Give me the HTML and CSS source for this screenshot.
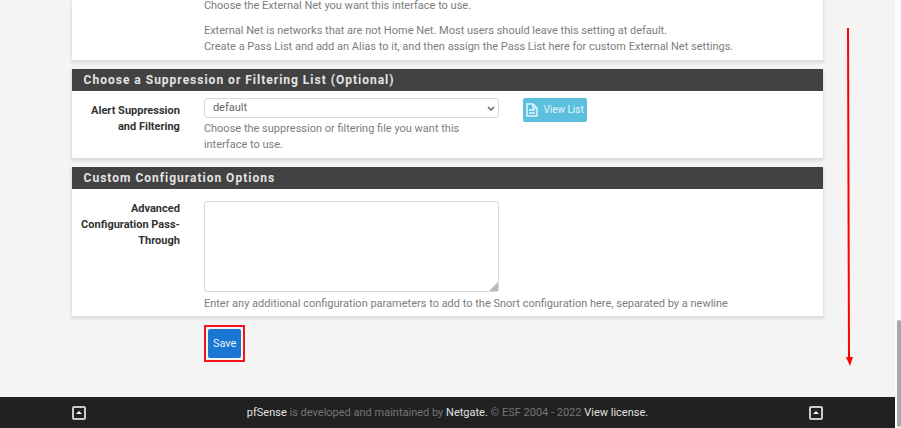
FILE: index.html
```html
<!DOCTYPE html>
<html lang="en">

<head>
    <meta charset="UTF-8">
    <meta name="viewport" content="width=device-width, initial-scale=1.0">
    <title>Snort: Interface Settings</title>
    <link rel="stylesheet" href="styles.css">
</head>

<body>
    <div class="page">
        <main class="container">
            <form>
                <section class="panel">
                    <div class="panel-body panel-body-first">
                        <div class="field field-wide">
                            <p class="help">Choose the External Net you want this interface to use.</p>
                            <p class="help">External Net is networks that are not Home Net. Most users should leave this setting at default.<br>
                                Create a Pass List and add an Alias to it, and then assign the Pass List here for custom External Net settings.</p>
                        </div>
                    </div>
                </section>

                <section class="panel">
                    <h2 class="panel-heading">Choose a Suppression or Filtering List (Optional)</h2>
                    <div class="panel-body panel-body-list">
                        <label class="label" for="suppresslist">Alert Suppression and Filtering</label>
                        <div class="field">
                            <div class="select-wrap">
                                <select class="form-control" id="suppresslist">
                                    <option>default</option>
                                </select>
                                <svg class="caret" viewBox="0 0 8 6" aria-hidden="true"><path d="M1 1l3 3 3-3" /></svg>
                            </div>
                            <p class="help">Choose the suppression or filtering file you want this interface to use.</p>
                        </div>
                        <div class="field">
                            <button class="btn btn-info" type="button">
                                <svg class="file-icon" viewBox="0 0 12 14" aria-hidden="true">
                                    <path d="M1 1h6l4 4v8H1zM7 1v4h4M3 7h6M3 10h6" />
                                </svg>
                                View List
                            </button>
                        </div>
                    </div>
                </section>

                <section class="panel">
                    <h2 class="panel-heading">Custom Configuration Options</h2>
                    <div class="panel-body panel-body-custom">
                        <label class="label" for="configpassthru">Advanced Configuration Pass-Through</label>
                        <div class="field">
                            <div class="textarea-wrap">
                                <textarea class="form-control" id="configpassthru"></textarea>
                                <svg class="grip" viewBox="0 0 9 9" aria-hidden="true"><path d="M9 0v9H0z" /></svg>
                            </div>
                        </div>
                        <p class="help help-row">Enter any additional configuration parameters to add to the Snort configuration here, separated by a newline</p>
                    </div>
                </section>

                <div class="actions">
                    <div class="highlight">
                        <button class="btn btn-primary" type="button">Save</button>
                    </div>
                </div>
            </form>
        </main>

        <footer class="footer">
            <div class="container footer-row">
                <a class="top-link" href="#" aria-label="Back to top">
                    <svg viewBox="0 0 14 14" aria-hidden="true"><rect x="1" y="1" width="12" height="12" rx="1" /><path d="M4 8l3-3 3 3z" /></svg>
                </a>
                <p class="credits"><a href="#">pfSense</a> is developed and maintained by <a href="#">Netgate.</a> © ESF 2004 - 2022 <a href="#">View license.</a></p>
                <a class="top-link" href="#" aria-label="Back to top">
                    <svg viewBox="0 0 14 14" aria-hidden="true"><rect x="1" y="1" width="12" height="12" rx="1" /><path d="M4 8l3-3 3 3z" /></svg>
                </a>
            </div>
        </footer>

        <svg class="arrow" viewBox="0 0 8 338" aria-hidden="true">
            <path d="M2 0h2l1 330H3z" />
            <path d="M1 329h7l-3 9z" />
        </svg>
    </div>

    <div class="scrollbar">
        <div class="scrollbar-thumb"></div>
    </div>
</body>

</html>
```
FILE: styles.css
```css
* {
    box-sizing: border-box;
}

body {
    display: flex;
    min-height: 100vh;
    margin: 0;
    background-color: #f4f4f4;
    color: #7d7d7d;
    font-family: Roboto, sans-serif;
    font-size: 11px;
    line-height: 16px;
}

.page {
    position: relative;
    display: flex;
    flex: 1;
    flex-direction: column;
    justify-content: space-between;
}

.container {
    width: 84%;
    margin: 0 auto;
}

.panel {
    margin-bottom: 9px;
    background-color: #fff;
    box-shadow: 0 2px 3px 1px rgba(0, 0, 0, 0.1);
}

.panel-heading {
    margin: 0;
    padding: 3px 12px;
    background-color: #424242;
    color: #e4e4e4;
    font-size: 12px;
    font-weight: 700;
    letter-spacing: 1px;
}

.panel-body {
    display: grid;
    grid-template-columns: 16% 42.5% 1fr;
}

.panel-body-first {
    padding-bottom: 5px;
}

.panel-body-list {
    padding: 7px 0 5px;
}

.panel-body-custom {
    padding: 12px 0 4px;
}

.label {
    padding: 5px 12px 0 4px;
    color: #333;
    font-weight: 700;
    text-align: right;
}

.panel-body-custom .label {
    padding-top: 0;
}

.field {
    padding: 0 12px;
}

.field-wide {
    grid-column: 2 / 4;
}

.help {
    margin: 0;
}

.help + .help {
    margin-top: 11px;
}

.select-wrap + .help {
    margin-top: 3px;
    padding-right: 32px;
}

.panel-body-first .help:first-child {
    line-height: 12px;
}

.help-row {
    grid-column: 2 / 4;
    padding: 4px 12px 0;
}

.form-control {
    display: block;
    width: 100%;
    border: 1px solid #d8d8d8;
    border-radius: 3px;
    background-color: #fff;
    color: #666;
    font: inherit;
}

select.form-control {
    height: 20px;
    padding: 0 8px;
    appearance: none;
}

textarea.form-control {
    height: 91px;
    resize: none;
}

.select-wrap,
.textarea-wrap {
    position: relative;
}

.caret {
    position: absolute;
    top: 8px;
    right: 4px;
    width: 8px;
    height: 6px;
    fill: none;
    stroke: #666;
    stroke-width: 1.5;
    pointer-events: none;
}

.grip {
    position: absolute;
    right: 1px;
    bottom: 1px;
    width: 9px;
    height: 9px;
    fill: #bbb;
    pointer-events: none;
}

.btn {
    border: 0;
    border-radius: 2px;
    color: #e4f2fc;
    font: inherit;
    cursor: pointer;
}

.btn-info {
    display: flex;
    align-items: center;
    gap: 5px;
    height: 24px;
    padding: 0 3px;
    background-color: #5bc0de;
    font-size: 10px;
}

.file-icon {
    width: 12px;
    height: 14px;
    fill: none;
    stroke: #e4f2fc;
    stroke-width: 1.5;
}

.btn-primary {
    height: 29px;
    padding: 0 5px;
    background-color: #1976d2;
}

.actions {
    display: flex;
    padding-left: calc(16% + 12px);
}

.highlight {
    padding: 2px;
    border: 2px solid #f8131b;
}

.footer {
    padding: 8px 0 7px;
    background-color: #212121;
}

.footer-row {
    display: flex;
    align-items: center;
    justify-content: space-between;
}

.credits {
    margin: 0;
    color: #757575;
}

.credits a {
    color: #e0e0e0;
    text-decoration: none;
}

.top-link svg {
    display: block;
    width: 14px;
    height: 14px;
}

.top-link rect {
    fill: none;
    stroke: #ccc;
    stroke-width: 2;
}

.top-link path {
    fill: #fff;
}

/* callout pointing down the page */
.arrow {
    position: absolute;
    top: 28px;
    right: 42px;
    width: 8px;
    height: 338px;
    fill: #f00;
}

.scrollbar {
    display: flex;
    align-items: flex-end;
    justify-content: flex-end;
    width: 6px;
    padding-bottom: 1px;
    background-color: #fcfcfc;
}

.scrollbar-thumb {
    width: 4px;
    height: 25%;
    border-radius: 2px;
    background-color: #a8a8a8;
}
```
